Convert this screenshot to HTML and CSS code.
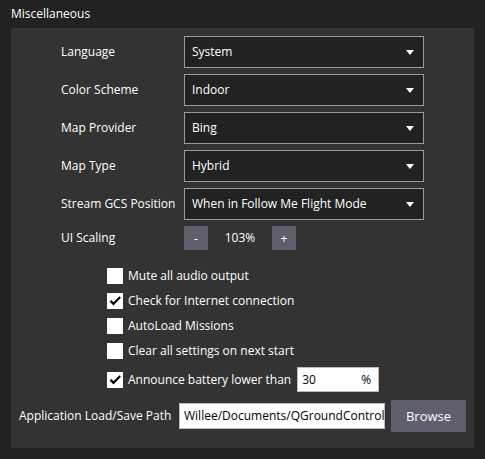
FILE: index.html
```html
<!DOCTYPE html>
<html lang="en">
	<head>
		<meta charset="UTF-8" />
		<meta name="viewport" content="width=device-width, initial-scale=1.0" />
		<title>Miscellaneous Settings</title>
		<link rel="stylesheet" href="styles.css">
	</head>
	<body>
		<div class="title">Miscellaneous</div>
		<div class="panel">
			<div class="form">
				<label>Language</label>
				<div class="combo"><span>System</span><i class="arrow"></i></div>
				<label>Color Scheme</label>
				<div class="combo"><span>Indoor</span><i class="arrow"></i></div>
				<label>Map Provider</label>
				<div class="combo"><span>Bing</span><i class="arrow"></i></div>
				<label>Map Type</label>
				<div class="combo"><span>Hybrid</span><i class="arrow"></i></div>
				<label>Stream GCS Position</label>
				<div class="combo"><span>When in Follow Me Flight Mode</span><i class="arrow"></i></div>
				<label>UI Scaling</label>
				<div class="scaling">
					<button class="btn small">-</button>
					<span class="scale-value">103%</span>
					<button class="btn small">+</button>
				</div>
			</div>

			<div class="checks">
				<div class="check">
					<span class="box"></span>
					<span>Mute all audio output</span>
				</div>
				<div class="check">
					<span class="box">
						<svg viewBox="0 0 16 16" width="16" height="16"><path d="M2.6 8.4 L4.3 6.9 L6.5 9.3 L12.5 3.2 L13.9 4.7 L6.5 12.6 Z" fill="#000"/></svg>
					</span>
					<span>Check for Internet connection</span>
				</div>
				<div class="check">
					<span class="box"></span>
					<span>AutoLoad Missions</span>
				</div>
				<div class="check">
					<span class="box"></span>
					<span>Clear all settings on next start</span>
				</div>
				<div class="check battery">
					<span class="box">
						<svg viewBox="0 0 16 16" width="16" height="16"><path d="M2.6 8.4 L4.3 6.9 L6.5 9.3 L12.5 3.2 L13.9 4.7 L6.5 12.6 Z" fill="#000"/></svg>
					</span>
					<span>Announce battery lower than</span>
					<div class="pct-field"><span>30</span><span>%</span></div>
				</div>
			</div>

			<div class="path-row">
				<label>Application Load/Save Path</label>
				<div class="path-field">Willee/Documents/QGroundControl</div>
				<button class="btn browse">Browse</button>
			</div>
		</div>
	</body>
</html>
```

FILE: styles.css
```css
body {
	margin: 0;
	background-color: #222;
	color: #fff;
	font-family: "Open Sans", "Liberation Sans", sans-serif;
	font-size: 12px;
	line-height: 18px;
}
label {
	white-space: nowrap;
}
.title {
	padding: 5px 0 0 11px;
	height: 23px;
}
.panel {
	background-color: #333;
	margin: 0 11px;
	padding: 8px 0 16px;
}
.form {
	display: grid;
	grid-template-columns: 123px 240px;
	row-gap: 6px;
	align-items: center;
	margin-left: 50px;
}
.combo {
	height: 30px;
	border: 1px solid #9a9a9a;
	background-color: #222;
	display: flex;
	align-items: center;
	justify-content: space-between;
	padding: 0 9px 0 7px;
}
.arrow {
	width: 0;
	height: 0;
	border-left: 4px solid transparent;
	border-right: 4px solid transparent;
	border-top: 5px solid #fff;
}
.scaling {
	display: flex;
	align-items: center;
}
.btn {
	background-color: #5f5e6d;
	color: #fff;
	border: none;
	font-family: inherit;
	font-size: 12px;
	padding: 0;
}
.btn.small {
	width: 24px;
	height: 24px;
}
.scale-value {
	width: 64px;
	text-align: center;
}
.checks {
	margin: 17px 0 0 96px;
	display: flex;
	flex-direction: column;
	gap: 7px;
}
.check {
	display: flex;
	align-items: center;
	gap: 5px;
	height: 18px;
}
.check.battery {
	height: 25px;
}
.box {
	width: 16px;
	height: 16px;
	background-color: #fff;
	display: block;
}
.box svg {
	display: block;
}
.pct-field {
	width: 69px;
	height: 23px;
	margin-left: 1px;
	border: 1px solid #bbb;
	background-color: #fff;
	color: #000;
	display: flex;
	align-items: center;
	justify-content: space-between;
	padding: 0 7px 0 4px;
}
.path-row {
	display: grid;
	grid-template-columns: 154px 206px 75px;
	column-gap: 6px;
	align-items: center;
	margin: 8px 0 0 8px;
}
.path-field {
	height: 24px;
	border: 1px solid #bbb;
	background-color: #fff;
	color: #000;
	padding-left: 4px;
	line-height: 24px;
	white-space: nowrap;
	overflow: hidden;
}
.btn.browse {
	height: 32px;
	font-size: 13px;
}
```
